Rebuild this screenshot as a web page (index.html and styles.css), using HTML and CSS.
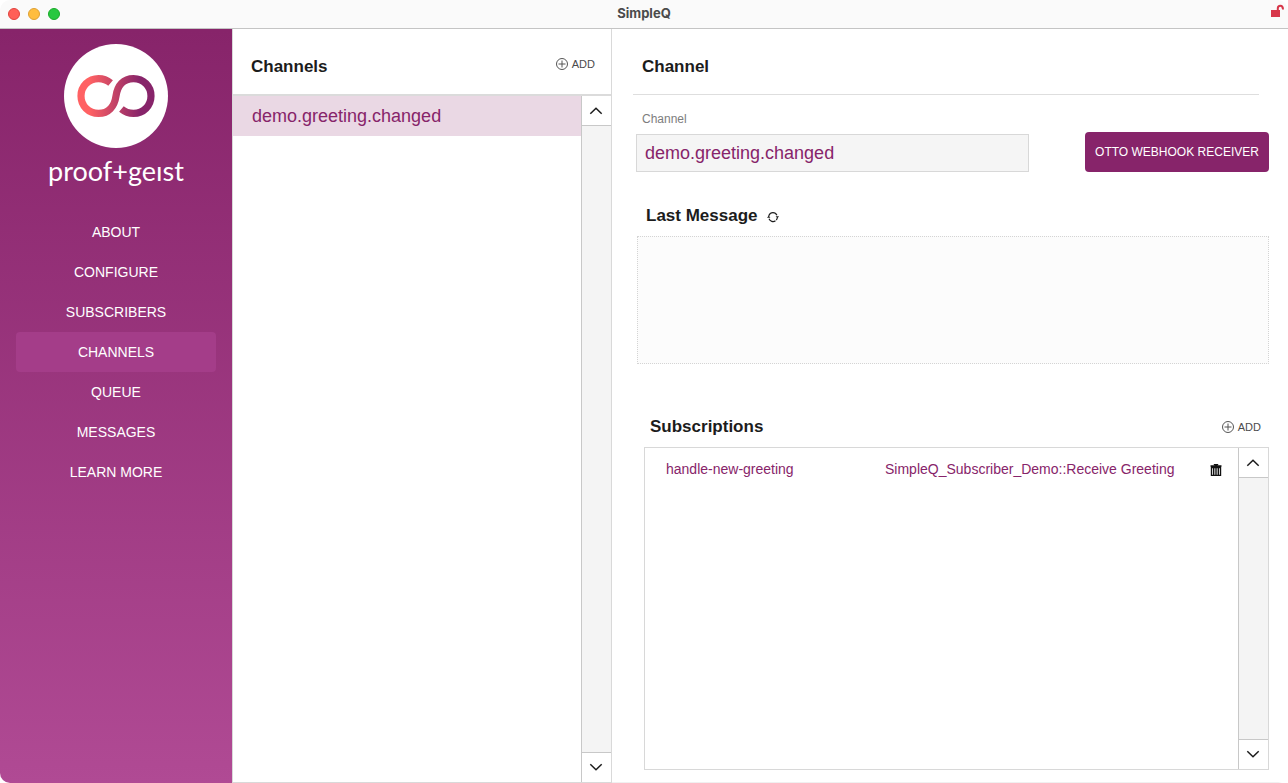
FILE: index.html
```html
<!DOCTYPE html>
<html lang="en">
<head>
<meta charset="utf-8">
<title>SimpleQ</title>
<meta name="viewport" content="width=device-width, initial-scale=1">
<link rel="stylesheet" href="styles.css">
</head>
<body>
<svg class="symbols" aria-hidden="true">
  <symbol id="plus" viewBox="0 0 12 12"><circle cx="6" cy="6" r="5.5"/><path d="M6 2.5v7M2.5 6h7"/></symbol>
  <symbol id="up" viewBox="0 0 14 8"><path d="M1.300 6.800 7 1.200l5.700 5.600"/></symbol>
  <symbol id="down" viewBox="0 0 14 8"><path d="M1.300 1.200 7 6.800l5.700-5.600"/></symbol>
</svg>
<div class="window">
  <header class="titlebar">
    <div class="lights">
      <button class="light close" aria-label="Close"></button>
      <button class="light minimize" aria-label="Minimize"></button>
      <button class="light expand" aria-label="Zoom"></button>
    </div>
    <div class="title">SimpleQ</div>
    <svg class="lock" viewBox="0 0 14 14" aria-label="Unlocked"><path d="M1 6h9v7H1z" fill="#d7374a"/><path d="M7.800 7V4.500C7.800 2.500 9 1.800 10.400 1.800S13 2.500 13 5.500" fill="none" stroke="#d7374a" stroke-width="2"/></svg>
  </header>
  <div class="panes">
    <aside class="sidebar">
      <div class="brand">
        <svg class="mark" viewBox="0 0 104 104" aria-hidden="true">
          <defs><linearGradient id="loop" gradientUnits="userSpaceOnUse" x1="14" y1="52" x2="90" y2="52"><stop offset=".15" stop-color="#ff6163"/><stop offset=".82" stop-color="#87246a"/></linearGradient></defs>
          <circle cx="52" cy="52" r="52" fill="#fff"/>
          <path d="M46.600 39C43 36 38.800 34.600 34.500 34.600C24.500 34.600 17 42.300 17 52S24.500 69.400 34.500 69.400C44.500 69.400 50.500 62.500 52 52C53.500 41.500 59.500 34.600 69.500 34.600C79.500 34.600 87 42.300 87 52S79.500 69.400 69.500 69.400C65.200 69.400 61 68 57.400 65" fill="none" stroke="url(#loop)" stroke-width="7.200"/>
        </svg>
        <div class="wordmark">proof+geıst</div>
      </div>
      <nav class="nav">
        <a href="#about">ABOUT</a>
        <a href="#configure">CONFIGURE</a>
        <a href="#subscribers">SUBSCRIBERS</a>
        <a href="#channels" class="active" aria-current="page">CHANNELS</a>
        <a href="#queue">QUEUE</a>
        <a href="#messages">MESSAGES</a>
        <a href="#learn">LEARN MORE</a>
      </nav>
    </aside>
    <section class="channels">
      <div class="channels-head">
        <h2>Channels</h2>
        <button class="add"><svg class="plus"><use href="#plus"/></svg>ADD</button>
      </div>
      <div class="scroller">
        <div class="scroll-content"><a class="channel" href="#demo">demo.greeting.changed</a></div>
        <div class="scrollbar">
          <button aria-label="Scroll up"><svg class="chevron"><use href="#up"/></svg></button>
          <button aria-label="Scroll down"><svg class="chevron"><use href="#down"/></svg></button>
        </div>
      </div>
    </section>
    <main class="detail">
      <div class="detail-head"><h2>Channel</h2></div>
      <div class="channel-form">
        <div class="field">
          <label for="channel">Channel</label>
          <input id="channel" type="text" value="demo.greeting.changed">
        </div>
        <button class="primary">OTTO WEBHOOK RECEIVER</button>
      </div>
      <div class="message-head">
        <h2><label for="message">Last Message</label></h2>
        <button class="icon-button" aria-label="Refresh"><svg class="refresh" viewBox="0 0 12 12"><path d="M2 4.200A4.300 4.300 0 0 1 9.900 4.200M10.300 6.500A4.300 4.300 0 0 1 9.300 9M2 7.800A4.300 4.300 0 0 0 8.500 9.700M1.700 5.500A4.300 4.300 0 0 1 2.200 4"/><path class="tip" d="M8.600 5.200h3.400L10.500 7.300zM0 6.800h3.400L1.700 4.700z"/></svg></button>
      </div>
      <textarea id="message" class="message"></textarea>
      <div class="subs-head">
        <h2>Subscriptions</h2>
        <button class="add"><svg class="plus"><use href="#plus"/></svg>ADD</button>
      </div>
      <div class="scroller subs">
        <div class="scroll-content">
          <table>
            <tbody><tr>
              <td class="name">handle-new-greeting</td>
              <td>SimpleQ_Subscriber_Demo::Receive Greeting</td>
              <td class="action"><button class="icon-button" aria-label="Delete"><svg class="trash" viewBox="0 0 12 12"><path d="M4.500 1V.5h3V1M.5 2h11M1.500 3.500v8h9v-8zM3.700 4v7M6 4v7M8.300 4v7"/></svg></button></td>
            </tr></tbody>
          </table>
        </div>
        <div class="scrollbar">
          <button aria-label="Scroll up"><svg class="chevron"><use href="#up"/></svg></button>
          <button aria-label="Scroll down"><svg class="chevron"><use href="#down"/></svg></button>
        </div>
      </div>
    </main>
  </div>
</div>
</body>
</html>
```

FILE: styles.css
```css
* { box-sizing: border-box; }

body {
  margin: 0;
  background: #fff;
  color: #1c1c1c;
  font-family: "Liberation Sans", Arial, sans-serif;
}

button {
  margin: 0;
  padding: 0;
  border: 0;
  background: none;
  font-family: inherit;
  cursor: pointer;
}

a { text-decoration: none; }

h2 {
  margin: 0;
  font-size: 17px;
  line-height: 20px;
  font-weight: bold;
}

.symbols {
  position: absolute;
  width: 0;
  height: 0;
}

.window {
  display: flex;
  flex-direction: column;
  min-height: 100vh;
  border-radius: 10px;
  overflow: hidden;
}

/* Title bar */
.titlebar {
  display: grid;
  grid-template-columns: 1fr auto 1fr;
  align-items: center;
  height: 29px;
  padding: 0 4px 0 8px;
  background: #fafafa;
  border-bottom: 1px solid #c4c4c4;
}

.lights {
  display: flex;
  gap: 8px;
}

.light {
  width: 12px;
  height: 12px;
  border: 1px solid;
  border-radius: 50%;
}

.close { background: #ff5f57; border-color: #e0443e; }
.minimize { background: #ffbd3e; border-color: #dea033; }
.expand { background: #28c840; border-color: #1aab29; }

.title {
  padding: 0 4px 2px 0;
  color: #4b4b4b;
  font: bold 13px/16px Inter, sans-serif;
}

.lock {
  justify-self: end;
  align-self: start;
  width: 14px;
  height: 14px;
  margin-top: 4px;
}

/* Columns */
.panes {
  display: flex;
  flex: 1;
}

.sidebar {
  width: 232px;
  flex: none;
  padding: 15px 16px;
  background: linear-gradient(#87246a, #b04a94);
}

.brand {
  display: flex;
  flex-direction: column;
  align-items: center;
}

.mark {
  width: 104px;
  height: 104px;
}

.wordmark {
  margin-top: 3px;
  color: #fff;
  font: 27px/40px Lato, sans-serif;
}

.nav {
  display: flex;
  flex-direction: column;
  margin-top: 21px;
}

.nav a {
  color: #fff;
  font-size: 14px;
  line-height: 40px;
  text-align: center;
  border-radius: 4px;
}

.nav .active { background: #a43d89; }

.channels {
  display: flex;
  flex-direction: column;
  width: 380px;
  flex: none;
  border: solid #d9d9d9;
  border-width: 0 1px 1px;
}

.channels-head {
  display: flex;
  align-items: center;
  justify-content: space-between;
  height: 67px;
  padding: 10px 16px 0 18px;
  border-bottom: 2px solid #dbdbdb;
}

.add {
  display: flex;
  align-items: center;
  gap: 4px;
  height: 16px;
  color: #4c4c4c;
  font-size: 11px;
}

.channels-head .add { margin-bottom: 6px; }

.plus {
  width: 12px;
  height: 12px;
  fill: none;
  stroke: #555;
  stroke-width: 1;
}

.scroller {
  display: flex;
  flex: 1;
}

.scroll-content { flex: 1; }

.channel {
  display: block;
  padding: 1px 0 0 19px;
  background: #ead8e4;
  color: #87246a;
  font-size: 18px;
  line-height: 39px;
}

.scrollbar {
  display: flex;
  flex-direction: column;
  justify-content: space-between;
  width: 30px;
  background: #f4f4f4;
  border-left: 1px solid #c8c8c8;
}

.scrollbar button {
  display: grid;
  place-items: center;
  height: 30px;
  padding-right: 2px;
  background: #fff;
  border-bottom: 1px solid #c8c8c8;
}

.scrollbar button:last-child {
  padding-bottom: 2px;
  border-top: 1px solid #c8c8c8;
  border-bottom: 0;
}

.chevron {
  width: 14px;
  height: 8px;
  fill: none;
  stroke: #1c1c1c;
  stroke-width: 1.5;
}

/* Channel detail */
.detail {
  display: flex;
  flex-direction: column;
  flex: 1;
  min-width: 0;
  padding: 0 19px 12px 21px;
  border-bottom: 1px solid #f0f0f0;
}

.detail-head {
  height: 66px;
  margin-right: 10px;
  padding: 28px 9px 0;
  border-bottom: 1px solid #dedede;
}

.channel-form {
  display: flex;
  align-items: flex-end;
  justify-content: space-between;
  gap: 56px;
  padding: 16px 0 0 3px;
}

.field {
  display: flex;
  flex: 1;
  flex-direction: column;
  gap: 7px;
}

.field label {
  padding-left: 6px;
  color: #7d7d7d;
  font-size: 12px;
  line-height: 16px;
}

.field input {
  width: 100%;
  height: 38px;
  padding: 0 8px;
  background: #f5f5f5;
  border: 1px solid #d8d8d8;
  color: #87246a;
  font: 18px "Liberation Sans", Arial, sans-serif;
}

.primary {
  width: 184px;
  height: 40px;
  border-radius: 4px;
  background: #87246a;
  color: #fff;
  font-size: 12px;
}

.message-head {
  display: flex;
  align-items: center;
  gap: 9px;
  padding: 34px 0 10px 13px;
}

.icon-button {
  display: grid;
  place-items: center;
}

.refresh {
  width: 12px;
  height: 12px;
  margin-top: 2px;
  fill: none;
  stroke: #1c1c1c;
  stroke-width: 1.2;
}

.refresh .tip {
  fill: #1c1c1c;
  stroke: none;
}

.message {
  height: 128px;
  margin-left: 4px;
  border: 1px dotted #d4d4d4;
  border-radius: 0;
  background: #fcfcfc;
  resize: none;
}

.subs-head {
  display: flex;
  align-items: center;
  justify-content: space-between;
  padding: 53px 8px 10px 17px;
}

.subs {
  margin-left: 11px;
  border: 1px solid #d8d8d8;
}

.subs table {
  width: 100%;
  border-collapse: collapse;
  color: #87246a;
  font-size: 14px;
}

.subs td {
  height: 42px;
  padding: 0;
}

.subs .name {
  width: 240px;
  padding-left: 21px;
}

.subs .action {
  width: 28px;
  padding-right: 16px;
}

.trash {
  width: 12px;
  height: 12px;
  margin-top: 1px;
  fill: none;
  stroke: #111;
  stroke-width: 1.4;
}
```
